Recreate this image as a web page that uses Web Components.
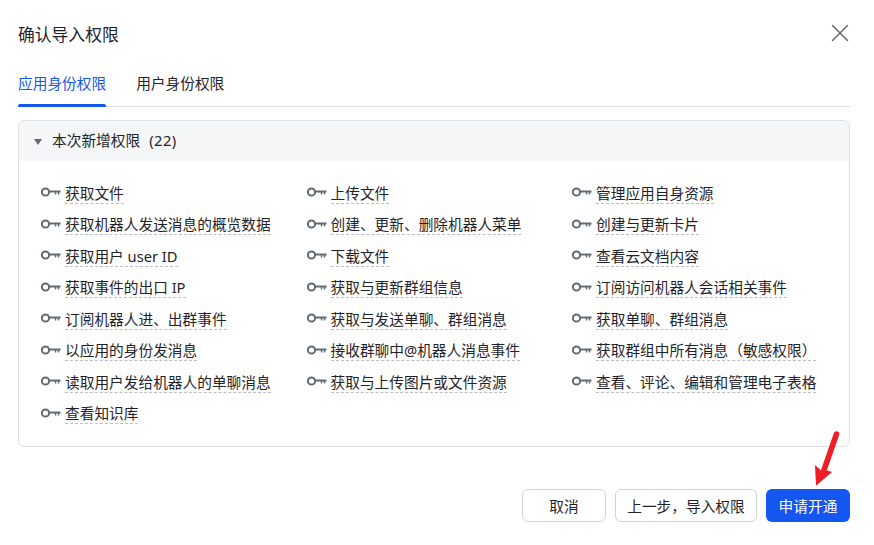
<!DOCTYPE html>
<html lang="zh"><head><meta charset="utf-8"><style>
html,body{margin:0;padding:0;background:#fff}
body{width:874px;height:545px;overflow:hidden;font-family:"Noto Sans","Noto Sans CJK SC",sans-serif;color:#1f2329}
</style></head><body>
<perm-dialog>
  <span slot="title">确认导入权限</span>
  <dlg-tab slot="tabs" active>应用身份权限</dlg-tab>
  <dlg-tab slot="tabs">用户身份权限</dlg-tab>
  <perm-panel heading="本次新增权限" count="(22)">
    <perm-item>获取文件</perm-item><perm-item>上传文件</perm-item><perm-item>管理应用自身资源</perm-item>
    <perm-item>获取机器人发送消息的概览数据</perm-item><perm-item>创建、更新、删除机器人菜单</perm-item><perm-item>创建与更新卡片</perm-item>
    <perm-item>获取用户 user ID</perm-item><perm-item>下载文件</perm-item><perm-item>查看云文档内容</perm-item>
    <perm-item>获取事件的出口 IP</perm-item><perm-item>获取与更新群组信息</perm-item><perm-item>订阅访问机器人会话相关事件</perm-item>
    <perm-item>订阅机器人进、出群事件</perm-item><perm-item>获取与发送单聊、群组消息</perm-item><perm-item>获取单聊、群组消息</perm-item>
    <perm-item>以应用的身份发消息</perm-item><perm-item>接收群聊中@机器人消息事件</perm-item><perm-item>获取群组中所有消息（敏感权限）</perm-item>
    <perm-item>读取用户发给机器人的单聊消息</perm-item><perm-item>获取与上传图片或文件资源</perm-item><perm-item>查看、评论、编辑和管理电子表格</perm-item>
    <perm-item>查看知识库</perm-item>
  </perm-panel>
  <dlg-button slot="footer" w="84">取消</dlg-button>
  <dlg-button slot="footer" w="142">上一步，导入权限</dlg-button>
  <dlg-button slot="footer" w="84" primary>申请开通</dlg-button>
</perm-dialog>
<script>
function def(name,html){
  customElements.define(name,class extends HTMLElement{
    connectedCallback(){
      if(this.shadowRoot)return;
      const r=this.attachShadow({mode:'open'});
      r.innerHTML=typeof html==='function'?html(this):html;
    }
  });
}
def('perm-dialog',`<style>
:host{display:flex;flex-direction:column;box-sizing:border-box;width:874px;height:545px;padding:0 24px 23px 18px;position:relative}
.head{display:flex;align-items:center;justify-content:space-between;box-sizing:border-box;height:68px;padding-top:1px;font-size:16.800px;line-height:24px;color:#1f2329}
.close{width:18px;height:18px;display:block;margin:-3px 1px 0 0}
.tabs{display:flex;gap:30px;height:38px;border-bottom:1px solid #dee0e3;margin-bottom:13px}
.body{flex:0 0 auto}
.foot{display:flex;justify-content:flex-end;gap:9px;margin-top:auto}
.arrow{position:absolute;left:812px;top:429px;width:28px;height:58px}
</style>
<div class="head"><slot name="title"></slot>
<svg class="close" viewBox="0 0 18 18"><path d="M1.500 1.500 16.500 16.500M16.500 1.500 1.500 16.500" stroke="#646a73" stroke-width="1.500" fill="none" stroke-linecap="round"/></svg></div>
<div class="tabs"><slot name="tabs"></slot></div>
<div class="body"><slot></slot></div>
<div class="foot"><slot name="footer"></slot></div>
<svg class="arrow" viewBox="0 0 28 58"><path d="M24.500 5 12 41" stroke="#ee1c25" stroke-width="5.500" stroke-linecap="round" fill="none"/><path d="M3 36 9 41.500H15L20 43 4 56.700Z" fill="#ee1c25"/></svg>`);
def('dlg-tab',t=>`<style>
:host{display:block;position:relative;font-size:14.700px;line-height:22px;padding-top:4px;height:34px;color:${t.hasAttribute('active')?'#1456f0':'#1f2329'}}
.bar{position:absolute;left:0;right:0;bottom:-1px;height:3px;border-radius:2px 2px 0 0;background:#1456f0;display:${t.hasAttribute('active')?'block':'none'}}
</style><slot></slot><div class="bar"></div>`);
def('perm-panel',t=>`<style>
:host{display:block;box-sizing:border-box;width:832px;height:327px;border:1px solid #dee0e3;border-radius:6px;overflow:hidden}
.h{display:flex;align-items:center;gap:10px;box-sizing:border-box;height:40px;background:#f5f6f7;padding:0 0 4px 15px;font-size:14.700px;color:#1f2329}
.c{margin-left:9px;letter-spacing:.5px}
.tri{width:0;height:0;border-left:4.500px solid transparent;border-right:4.500px solid transparent;border-top:6px solid #646a73;margin-top:5px}
.g{display:grid;grid-template-columns:265.500px 265.500px 1fr;grid-auto-rows:31.500px;padding:17px 0 0 22px}
</style><div class="h"><span class="tri"></span><span>${t.getAttribute('heading')}<span class="c">${t.getAttribute('count')}</span></span></div><div class="g"><slot></slot></div>`);
def('perm-item',`<style>
:host{display:flex;align-items:center;gap:4px;font-size:14.700px;line-height:20px;color:#1f2329;white-space:nowrap;height:31.500px}
svg{width:20px;height:10px;flex:none;margin-top:-3px}
.t{border-bottom:1px dashed #bbbfc4;line-height:19px}
</style><svg viewBox="0 0 20 10"><circle cx="4.500" cy="5" r="3.600" fill="none" stroke="#646a73" stroke-width="2"/><path d="M8.500 3.600H19.500V5.500H18.300V7.500H16.800V5.500H15.300V7.500H13.800V5.500H8.500Z" fill="#646a73"/></svg><span class="t"><slot></slot></span>`);
def('dlg-button',t=>{const p=t.hasAttribute('primary');return `<style>
:host{display:flex;align-items:center;justify-content:center;box-sizing:border-box;width:${t.getAttribute('w')}px;height:33px;border-radius:6px;font-size:14.700px;${p?'background:#1456f0;color:#fff':'background:#fff;border:1px solid #d0d3d6;color:#1f2329'}}
</style><slot></slot>`});
</script>
</body></html>
